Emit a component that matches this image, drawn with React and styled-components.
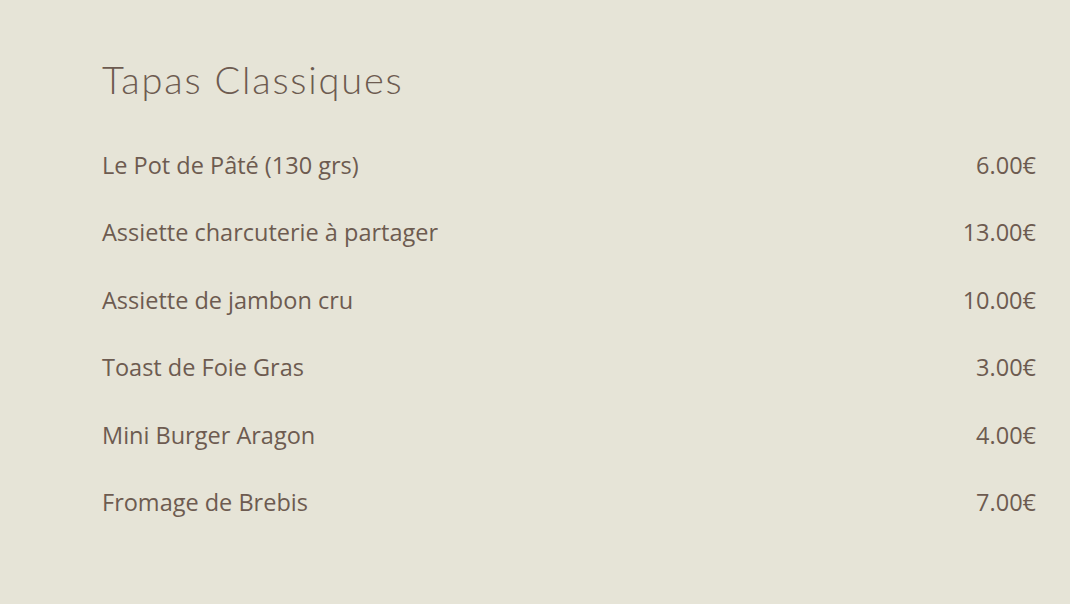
import React from 'react';
import styled, { createGlobalStyle } from 'styled-components';

const GlobalStyle = createGlobalStyle`
	html, body {
		margin: 0;
		padding: 0;
		background-color: #e6e4d7;
	}
`;

const Page = styled.div`
	width: 1070px;
	height: 604px;
	box-sizing: border-box;
	padding: 57px 34px 0 102px;
	background-color: #e6e4d7;
	color: #6d5b50;
`;

const Title = styled.h2`
	margin: 0 0 30px;
	font-family: 'Lato', 'DejaVu Sans', sans-serif;
	font-weight: 300;
	font-size: 38px;
	line-height: 44px;
	letter-spacing: 1.8px;
	color: #6d5b50;
`;

const MenuList = styled.ul`
	margin: 0;
	padding: 0;
	list-style: none;
`;

const MenuItem = styled.li`
	display: flex;
	justify-content: space-between;
	align-items: center;
	height: 67.5px;
	font-family: 'Open Sans', 'Liberation Sans', sans-serif;
	font-size: 23.5px;
	color: #6d5b50;
`;

const Price = styled.span`
	text-align: right;
`;

const items = [
	{ name: 'Le Pot de Pâté (130 grs)', price: '6.00€' },
	{ name: 'Assiette charcuterie à partager', price: '13.00€' },
	{ name: 'Assiette de jambon cru', price: '10.00€' },
	{ name: 'Toast de Foie Gras', price: '3.00€' },
	{ name: 'Mini Burger Aragon', price: '4.00€' },
	{ name: 'Fromage de Brebis', price: '7.00€' },
];

const App = () => (
	<>
		<GlobalStyle />
		<Page>
			<Title>Tapas Classiques</Title>
			<MenuList>
				{items.map(item => (
					<MenuItem key={item.name}>
						<span>{item.name}</span>
						<Price>{item.price}</Price>
					</MenuItem>
				))}
			</MenuList>
		</Page>
	</>
);

export default App;
